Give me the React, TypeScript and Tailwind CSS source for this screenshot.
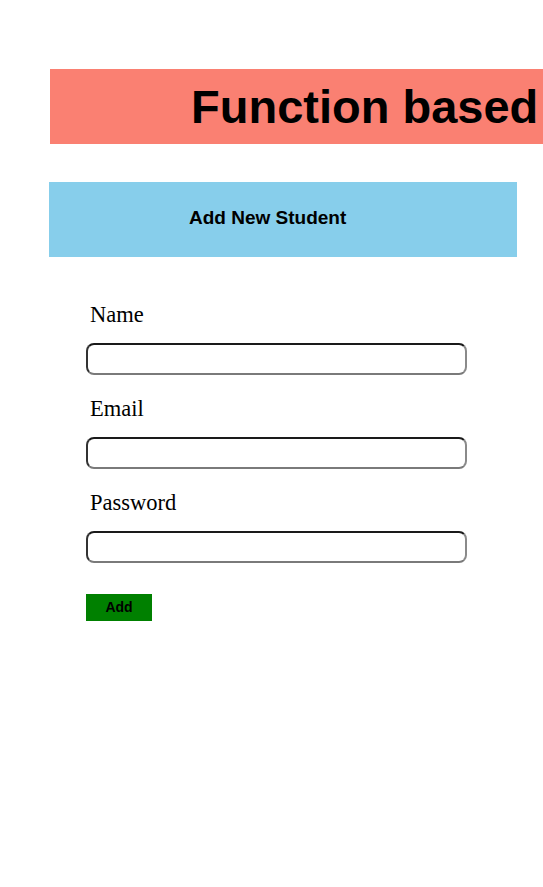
export default function App() {
  const fields = [
    { label: "Name", type: "text" },
    { label: "Email", type: "email" },
    { label: "Password", type: "password" },
  ];

  return (
    <div className="min-h-[887px] w-[543px] overflow-hidden bg-white">
      <div className="pt-[69px] pl-[50px]">
        <div className="flex h-[75px] w-[520px] items-center bg-[#fa8072] pl-[141px]">
          <h1 className="whitespace-nowrap font-['Liberation_Sans',Arial,sans-serif] text-[47px] font-bold leading-none text-black">
            Function based
          </h1>
        </div>
      </div>

      <div className="mt-[38px] ml-[49px] flex h-[75px] w-[468px] items-center bg-[#87ceeb] pb-[3px] pl-[140px]">
        <h3 className="font-['Liberation_Sans',Arial,sans-serif] text-[19px] font-bold text-black">
          Add New Student
        </h3>
      </div>

      <form className="mt-[45px] ml-[86px] flex w-[381px] flex-col">
        {fields.map((f, i) => (
          <div key={f.label} className={i === 0 ? "flex flex-col" : "mt-[21px] flex flex-col"}>
            <label className="pl-[4px] font-['Liberation_Serif','Times_New_Roman',serif] text-[22.5px] leading-[25px] text-black">
              {f.label}
            </label>
            <input
              type={f.type}
              className="mt-[16px] h-[32px] w-full rounded-lg border-2 border-t-[#1a1a1a] border-l-[#333] border-r-[#8a8a8a] border-b-[#7a7a7a] bg-white px-2 outline-none"
            />
          </div>
        ))}
        <button
          type="button"
          className="mt-[31px] h-[27px] w-[66px] bg-[#008000] font-['Liberation_Sans',Arial,sans-serif] text-[14px] font-bold text-black"
        >
          Add
        </button>
      </form>
    </div>
  );
}
